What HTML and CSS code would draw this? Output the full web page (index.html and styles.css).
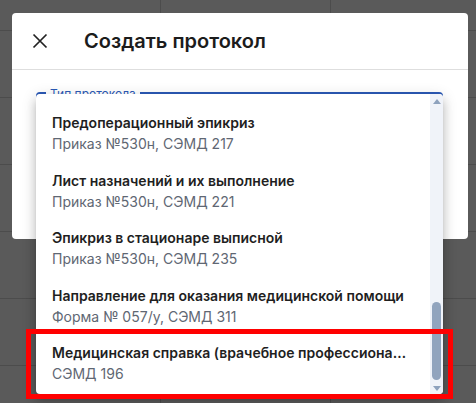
FILE: index.html
```html
<!DOCTYPE html>
<html lang="ru">
<head>
<meta charset="utf-8">
<title>Создать протокол</title>
<link rel="stylesheet" href="styles.css">
</head>
<body>
<div class="backdrop-grid">
  <div class="grid-row first"><div class="cell c1"></div><div class="cell c2"></div><div class="cell c3"></div></div>
  <div class="grid-row"><div class="cell c1"></div><div class="cell c2"></div><div class="cell c3"></div></div>
  <div class="grid-row"><div class="cell c1"></div><div class="cell c2"></div><div class="cell c3"></div></div>
  <div class="grid-row"><div class="cell c1"></div><div class="cell c2"></div><div class="cell c3"></div></div>
  <div class="grid-row"><div class="cell c1"></div><div class="cell c2"></div><div class="cell c3"></div></div>
  <div class="grid-row"><div class="cell c1"></div><div class="cell c2"></div><div class="cell c3"></div></div>
  <div class="grid-row last"><div class="cell c1"></div><div class="cell c2"></div><div class="cell c3"></div></div>
</div>

<div class="dialog">
  <div class="dialog-header">
    <button class="close-btn" aria-label="Закрыть">
      <svg width="24" height="24" viewBox="0 0 24 24"><path d="M5.5 5.5 18.5 18.5 M18.5 5.5 5.5 18.5" stroke="#222" stroke-width="1.7" fill="none"/></svg>
    </button>
    <h2 class="dialog-title">Создать протокол</h2>
  </div>
  <div class="dialog-body">
    <div class="field"><span class="field-label">Тип протокола</span></div>
  </div>
</div>

<div class="menu">
  <ul class="menu-list">
    <li class="menu-item"><div class="item-title">Предоперационный эпикриз</div><div class="item-sub">Приказ №530н, СЭМД 217</div></li>
    <li class="menu-item"><div class="item-title">Лист назначений и их выполнение</div><div class="item-sub">Приказ №530н, СЭМД 221</div></li>
    <li class="menu-item"><div class="item-title">Эпикриз в стационаре выписной</div><div class="item-sub">Приказ №530н, СЭМД 235</div></li>
    <li class="menu-item"><div class="item-title">Направление для оказания медицинской помощи</div><div class="item-sub">Форма № 057/у, СЭМД 311</div></li>
    <li class="menu-item"><div class="item-title">Медицинская справка (врачебное профессиональное заключение)</div><div class="item-sub">СЭМД 196</div></li>
  </ul>
  <div class="scrollbar">
    <span class="arrow up"></span>
    <span class="thumb"></span>
    <span class="arrow down"></span>
  </div>
</div>

<div class="highlight"></div>
</body>
</html>
```

FILE: styles.css
```css
* { box-sizing: border-box; }
html, body { margin: 0; padding: 0; }
body {
  width: 476px;
  height: 403px;
  overflow: hidden;
  background: #5a5a5a;
  font-family: "Inter", "Noto Sans", sans-serif;
  position: relative;
}

.backdrop-grid { display: flex; flex-direction: column; height: 403px; }
.grid-row { display: flex; height: 67px; border-bottom: 1px solid #4c4c4c; }
.grid-row.first { height: 31px; }
.grid-row.last { height: 37px; border-bottom: none; }
.cell { border-right: 1px solid #4c4c4c; }
.c1 { width: 161px; }
.c2 { width: 170px; }
.c3 { flex: 1; border-right: none; }

.dialog {
  position: absolute;
  left: 12px;
  top: 13px;
  width: 456px;
  height: 226px;
  background: #fff;
  border-radius: 4px;
}
.dialog-header {
  height: 56px;
  display: flex;
  align-items: center;
  padding-left: 16px;
  border-bottom: 1px solid #dedede;
  box-sizing: content-box;
}
.close-btn {
  border: 0;
  background: none;
  padding: 0;
  width: 24px;
  height: 24px;
  display: flex;
}
.dialog-title {
  margin: 0 0 0 32px;
  font-size: 20px;
  font-weight: 600;
  color: #1c1c1c;
  line-height: 24px;
}
.dialog-body { padding: 22px 25px 0 24px; }
.field {
  height: 56px;
  border: 2px solid #2c5ab6;
  border-radius: 4px;
  position: relative;
}
.field-label {
  position: absolute;
  left: 8px;
  top: -6px;
  padding: 0 4px;
  background: #fff;
  font-size: 12px;
  line-height: 12px;
  color: #2c5ab6;
}

.menu {
  position: absolute;
  left: 36px;
  top: 94px;
  width: 407px;
  height: 300px;
  background: #fff;
  border-radius: 4px;
  display: flex;
  overflow: hidden;
  box-shadow: 0 5px 5px -3px rgba(0,0,0,.2), 0 8px 10px 1px rgba(0,0,0,.14), 0 3px 14px 2px rgba(0,0,0,.12);
}
.menu-list {
  list-style: none;
  margin: 0;
  padding: 10px 0 0;
  flex: 1;
  min-width: 0;
}
.menu-item { padding: 8px 16px 7.5px; }
.item-title {
  font-size: 14px;
  font-weight: 600;
  line-height: 21px;
  color: #1f1f1f;
  white-space: nowrap;
  overflow: hidden;
  text-overflow: ellipsis;
}
.item-sub {
  font-size: 14px;
  line-height: 21px;
  color: #5f6773;
  white-space: nowrap;
}

.scrollbar {
  width: 13px;
  background: #f0f3f9;
  display: flex;
  flex-direction: column;
  align-items: center;
  padding: 5px 0 3px;
}
.arrow {
  width: 0;
  height: 0;
  border-left: 4.5px solid transparent;
  border-right: 4.5px solid transparent;
}
.arrow.up { border-bottom: 5px solid #8ea2bd; }
.arrow.down { border-top: 5px solid #8ea2bd; }
.thumb {
  margin-top: auto;
  margin-bottom: 6px;
  width: 9px;
  height: 78px;
  border-radius: 5px;
  background: #91a4be;
}

.highlight {
  position: absolute;
  left: 26px;
  top: 329px;
  width: 427px;
  height: 70px;
  border: 5px solid #ff0000;
}
```
